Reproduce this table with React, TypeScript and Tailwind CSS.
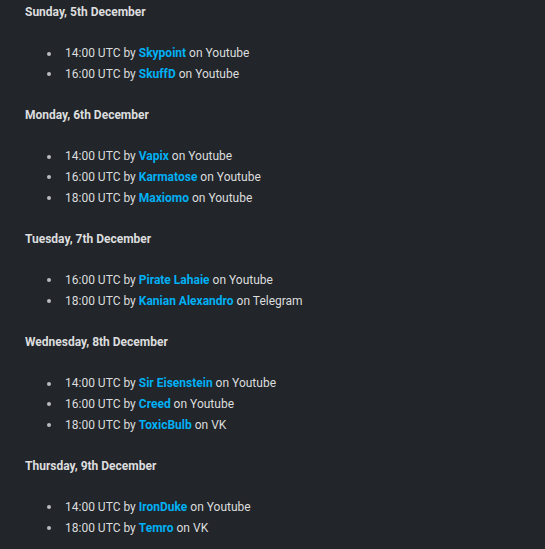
import React from "react";

type Item = { time: string; name: string; platform: string };
type Day = { title: string; items: Item[] };

const days: Day[] = [
  {
    title: "Sunday, 5th December",
    items: [
      { time: "14:00", name: "Skypoint", platform: "Youtube" },
      { time: "16:00", name: "SkuffD", platform: "Youtube" },
    ],
  },
  {
    title: "Monday, 6th December",
    items: [
      { time: "14:00", name: "Vapix", platform: "Youtube" },
      { time: "16:00", name: "Karmatose", platform: "Youtube" },
      { time: "18:00", name: "Maxiomo", platform: "Youtube" },
    ],
  },
  {
    title: "Tuesday, 7th December",
    items: [
      { time: "16:00", name: "Pirate Lahaie", platform: "Youtube" },
      { time: "18:00", name: "Kanian Alexandro", platform: "Telegram" },
    ],
  },
  {
    title: "Wednesday, 8th December",
    items: [
      { time: "14:00", name: "Sir Eisenstein", platform: "Youtube" },
      { time: "16:00", name: "Creed", platform: "Youtube" },
      { time: "18:00", name: "ToxicBulb", platform: "VK" },
    ],
  },
  {
    title: "Thursday, 9th December",
    items: [
      { time: "14:00", name: "IronDuke", platform: "Youtube" },
      { time: "18:00", name: "Temro", platform: "VK" },
    ],
  },
];

export default function App() {
  return (
    <div
      className="min-h-screen w-full bg-[#222529] pl-[25px] pt-[2px] text-[12px] leading-[20.625px] text-[#dcddde]"
      style={{ fontFamily: "Roboto, 'Liberation Sans', sans-serif" }}
    >
      {days.map((d) => (
        <div key={d.title} className="flex flex-col gap-[20.625px] pb-[20.625px]">
          <div className="font-bold text-[#dcddde]">{d.title}</div>
          <ul className="flex flex-col">
            {d.items.map((it) => (
              <li key={it.name} className="flex items-center">
                <span className="ml-[22px] mr-[14px] h-[4px] w-[4px] rounded-full bg-[#b9bbbe]" />
                <span>
                  {it.time} UTC by{" "}
                  <span className="font-bold text-[#00b0f4]">{it.name}</span> on{" "}
                  {it.platform}
                </span>
              </li>
            ))}
          </ul>
        </div>
      ))}
    </div>
  );
}
